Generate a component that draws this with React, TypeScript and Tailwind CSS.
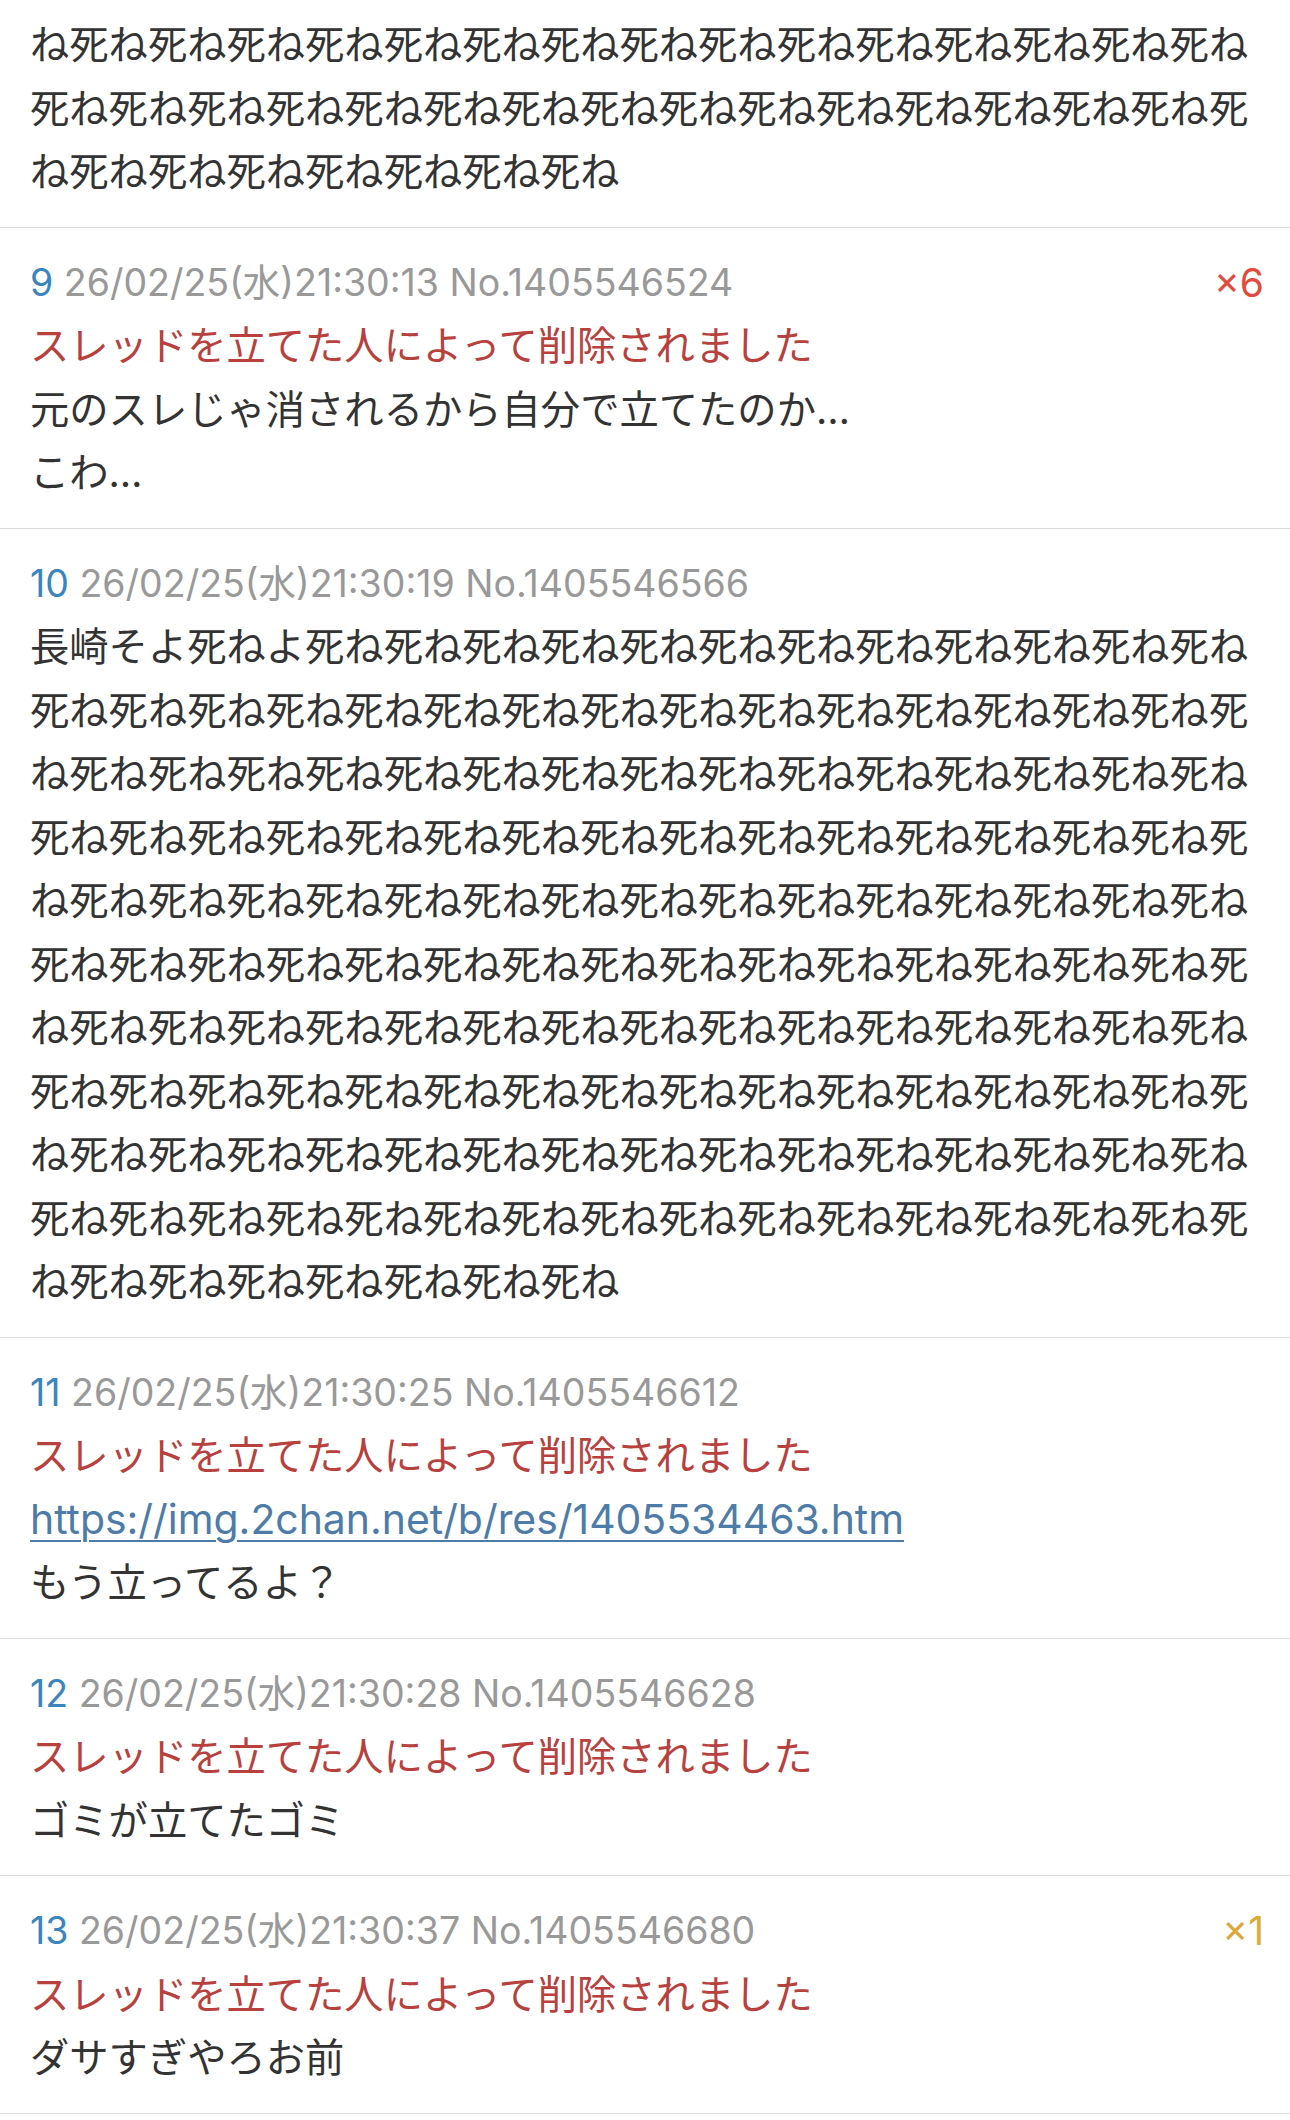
import React from "react";

const SHINE = (n: number) => "死ね".repeat(n);

type Post = {
  no: number;
  date: string;
  id: string;
  deleted?: boolean;
  lines: { text: string; link?: boolean }[];
  badge?: { text: string; color: string };
};

const posts: Post[] = [
  {
    no: 9,
    date: "26/02/25(水)21:30:13",
    id: "No.1405546524",
    deleted: true,
    lines: [{ text: "元のスレじゃ消されるから自分で立てたのか…" }, { text: "こわ…" }],
    badge: { text: "×6", color: "text-[#e04b3c]" },
  },
  {
    no: 10,
    date: "26/02/25(水)21:30:19",
    id: "No.1405546566",
    lines: [{ text: "長崎そよ死ねよ" + SHINE(159) }],
  },
  {
    no: 11,
    date: "26/02/25(水)21:30:25",
    id: "No.1405546612",
    deleted: true,
    lines: [
      { text: "https://img.2chan.net/b/res/1405534463.htm", link: true },
      { text: "もう立ってるよ？" },
    ],
  },
  {
    no: 12,
    date: "26/02/25(水)21:30:28",
    id: "No.1405546628",
    deleted: true,
    lines: [{ text: "ゴミが立てたゴミ" }],
  },
  {
    no: 13,
    date: "26/02/25(水)21:30:37",
    id: "No.1405546680",
    deleted: true,
    lines: [{ text: "ダサすぎやろお前" }],
    badge: { text: "×1", color: "text-[#dba83a]" },
  },
];

const FONT = "font-['Inter','Noto_Sans_CJK_JP',sans-serif]";

export default function App() {
  return (
    <div className={`w-[1290px] min-h-[2120px] bg-white ${FONT} text-[39.3px] leading-[63.5px] text-[#333333]`}>
      <div className="px-[30px] pt-[13px] pb-[23px] border-b border-[#dcdcdc] break-all">
        {"ね" + SHINE(38)}
      </div>
      {posts.map((p) => (
        <div key={p.no} className="px-[30px] py-[23px] border-b border-[#dcdcdc]">
          <div className="flex items-center justify-between">
            <div className="text-[37.5px]">
              <span className="text-[#3b85bd]">{p.no}</span>{" "}
              <span className="text-[#999999]">
                {p.date} {p.id}
              </span>
            </div>
            {p.badge && <div className={`text-[39px] -mr-[4px] ${p.badge.color}`}>{p.badge.text}</div>}
          </div>
          {p.deleted && <div className="text-[#b8403d]">スレッドを立てた人によって削除されました</div>}
          {p.lines.map((l, i) =>
            l.link ? (
              <div key={i}>
                <a
                  className="text-[40.9px] text-[#4e7ca8] underline underline-offset-[6px] decoration-[2px]"
                  href="#"
                >
                  {l.text}
                </a>
              </div>
            ) : (
              <div key={i} className="break-all">
                {l.text}
              </div>
            )
          )}
        </div>
      ))}
    </div>
  );
}
